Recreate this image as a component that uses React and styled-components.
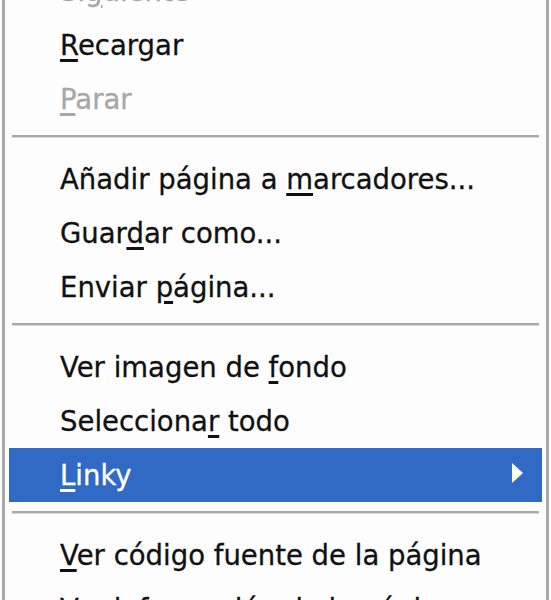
import React from "react";
import styled, { createGlobalStyle } from "styled-components";

const GlobalStyle = createGlobalStyle`
  html, body {
    margin: 0;
    padding: 0;
    background: #ffffff;
    overflow: hidden;
  }
`;

const Menu = styled.ul`
  list-style: none;
  margin: -36px 0 0 2px;
  padding: 0;
  width: 541px;
  min-height: 700px;
  background: #fdfdfd;
  border-left: 3px solid #a9a9a9;
  border-right: 3px solid #a9a9a9;
  font-family: "DejaVu Sans", Tahoma, sans-serif;
  font-size: 27.5px;
`;

const Item = styled.li`
  position: relative;
  display: flex;
  align-items: center;
  height: 54px;
  margin: 0 4px;
  padding-left: 51px;
  box-sizing: border-box;
  white-space: nowrap;
  -webkit-text-stroke: 0.3px currentColor;
  color: ${(p) => (p.disabled ? "#a7a7a7" : p.active ? "#ffffff" : "#111111")};
  background: ${(p) => (p.active ? "#316ac5" : "transparent")};
`;

const Key = styled.span`
  text-decoration: underline;
  text-decoration-thickness: 2.5px;
  text-underline-offset: 4px;
`;

const Separator = styled.li`
  height: 26px;
  margin: 0 7px;
  padding-top: 9px;
  box-sizing: border-box;

  &::before {
    content: "";
    display: block;
    height: 2px;
    background: #a8a8a8;
    border-bottom: 1px solid #d8d8d8;
  }
`;

const Arrow = styled.svg`
  position: absolute;
  right: 19px;
  top: 15px;
  width: 11px;
  height: 20px;
`;

// label with the access-key letter (by index) underlined
const Label = ({ text, at }) => (
  <>
    {text.slice(0, at)}
    <Key>{text[at]}</Key>
    {text.slice(at + 1)}
  </>
);

const groups = [
  [
    { text: "Siguiente", at: 2, disabled: true },
    { text: "Recargar", at: 0 },
    { text: "Parar", at: 0, disabled: true },
  ],
  [
    { text: "Añadir página a marcadores...", at: 16 },
    { text: "Guardar como...", at: 4 },
    { text: "Enviar página...", at: 7 },
  ],
  [
    { text: "Ver imagen de fondo", at: 14 },
    { text: "Seleccionar todo", at: 10 },
    { text: "Linky", at: 0, active: true, submenu: true },
  ],
  [
    { text: "Ver código fuente de la página", at: 0 },
    { text: "Ver información de la página", at: 4 },
  ],
];

export default function App() {
  return (
    <>
      <GlobalStyle />
      <Menu>
        {groups.map((group, gi) => (
          <React.Fragment key={gi}>
            {gi > 0 && <Separator />}
            {group.map((it) => (
              <Item key={it.text} disabled={it.disabled} active={it.active}>
                <span>
                  <Label text={it.text} at={it.at} />
                </span>
                {it.submenu && (
                  <Arrow viewBox="0 0 11 20">
                    <path d="M0 0 L11 10 L0 20 Z" fill="#ffffff" />
                  </Arrow>
                )}
              </Item>
            ))}
          </React.Fragment>
        ))}
      </Menu>
    </>
  );
}
